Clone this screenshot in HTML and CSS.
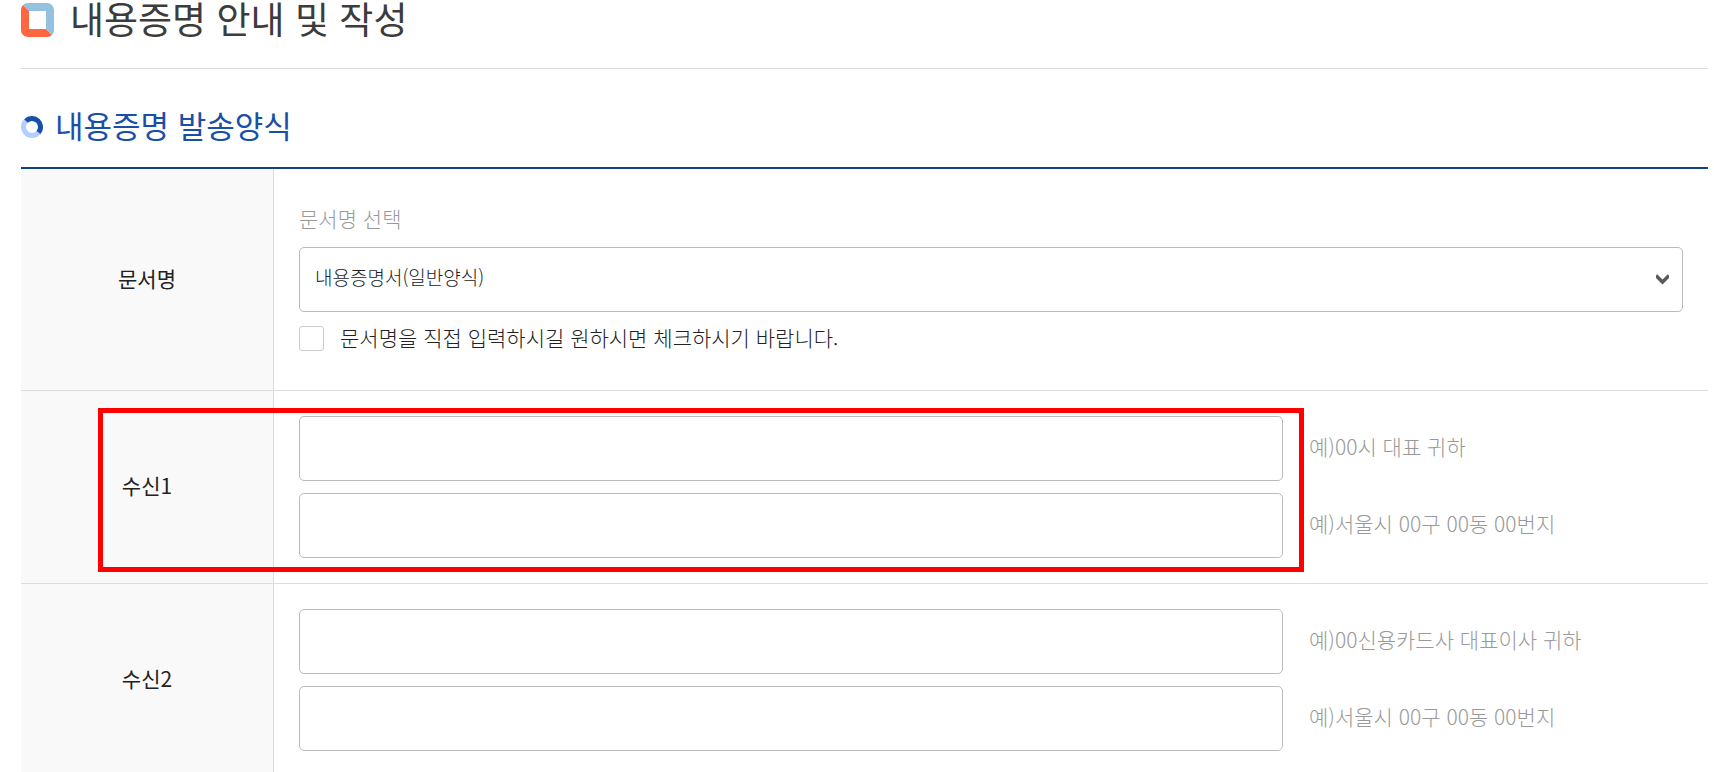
FILE: index.html
```html
<!DOCTYPE html>
<html lang="ko">
<head>
<meta charset="utf-8">
<title>내용증명 안내 및 작성</title>
<link rel="stylesheet" href="styles.css">
</head>
<body>
<main class="page">
  <header class="page-header">
    <svg class="page-icon" viewBox="0 0 33 34" aria-hidden="true">
      <path fill="#93c1df" d="M2 2A7 7 0 0 1 7 0H26A7 7 0 0 1 33 7V27A7 7 0 0 1 31 32L25 26V8H8Z"/>
      <path fill="#ff673f" d="M2 2A7 7 0 0 0 0 7V27A7 7 0 0 0 7 34H26A7 7 0 0 0 31 32L25 26H8V8Z"/>
    </svg>
    <h1 class="page-title">내용증명 안내 및 작성</h1>
  </header>

  <form class="notice-form">
    <div class="section-header">
      <svg class="section-icon" viewBox="0 0 22 22" aria-hidden="true">
        <circle cx="11" cy="11" r="8.5" fill="none" stroke="#b3cfff" stroke-width="5"/>
        <path d="M5 5A8.500 8.500 0 0 1 17.500 16.500" fill="none" stroke="#194fa8" stroke-width="5"/>
      </svg>
      <h2 class="section-title">내용증명 발송양식</h2>
    </div>

    <table class="form-table">
      <tbody>
        <tr>
          <th scope="row">문서명</th>
          <td class="document-cell">
            <label class="hint select-label" for="document">문서명 선택</label>
            <div class="select-wrap">
              <select class="field select" id="document">
                <option>내용증명서(일반양식)</option>
              </select>
              <svg class="chevron" viewBox="0 0 13 11" aria-hidden="true"><path d="M0 1.500L6.500 8L13 1.500" fill="none" stroke="#5a5a5a" stroke-width="3.500"/></svg>
            </div>
            <div class="check-row">
              <input class="checkbox" id="custom-name" type="checkbox">
              <label class="check-label" for="custom-name">문서명을 직접 입력하시길 원하시면 체크하시기 바랍니다.</label>
            </div>
          </td>
        </tr>
        <tr class="highlighted">
          <th scope="row">수신1</th>
          <td>
            <div class="field-list">
              <div class="field-row"><input class="field" id="to1-name" type="text"><label class="hint" for="to1-name">예)00시 대표 귀하</label></div>
              <div class="field-row"><input class="field" id="to1-address" type="text"><label class="hint" for="to1-address">예)서울시 00구 00동 00번지</label></div>
            </div>
          </td>
        </tr>
        <tr>
          <th scope="row">수신2</th>
          <td>
            <div class="field-list">
              <div class="field-row"><input class="field" id="to2-name" type="text"><label class="hint" for="to2-name">예)00신용카드사 대표이사 귀하</label></div>
              <div class="field-row"><input class="field" id="to2-address" type="text"><label class="hint" for="to2-address">예)서울시 00구 00동 00번지</label></div>
            </div>
          </td>
        </tr>
      </tbody>
    </table>
  </form>
</main>
</body>
</html>
```
FILE: styles.css
```css
* {
  box-sizing: border-box;
}

body {
  margin: 0;
  background: #fff;
  color: #222;
  font-family: "Noto Sans CJK KR", sans-serif;
  font-size: 21px;
  font-weight: 300;
  line-height: 30px;
}

.page {
  padding: 0 6px 0 21px;
}

.page-header {
  display: flex;
  align-items: flex-start;
  gap: 16px;
  padding-bottom: 31px;
  border-bottom: 1px solid #ddd;
}

.page-icon {
  width: 33px;
  height: 34px;
  margin-top: 3px;
}

.page-title {
  margin: 0;
  color: #3c3c3c;
  font-size: 37px;
  font-weight: 400;
  line-height: 36px;
}

.section-header {
  display: flex;
  align-items: center;
  gap: 12px;
  padding: 36px 0 18px;
}

.section-icon {
  width: 22px;
  height: 22px;
}

.section-title {
  margin: 0;
  padding-bottom: 4px;
  color: #194fa8;
  font-size: 31px;
  font-weight: 400;
  line-height: 40px;
}

.form-table {
  width: 100%;
  border-collapse: separate;
  border-spacing: 0;
  border-top: 2px solid #104382;
}

.form-table th,
.form-table td {
  padding: 25px;
  border-bottom: 1px solid #ddd;
}

.form-table th {
  width: 253px;
  padding-bottom: 29px;
  border-right: 1px solid #ddd;
  background: #f9f9f9;
  font-weight: 400;
  text-align: center;
}

.form-table .document-cell {
  padding: 34px 25px 36px;
}

.hint {
  padding-bottom: 5px;
  color: #999;
}

.select-label {
  display: block;
  margin-bottom: 9px;
}

.select-wrap {
  position: relative;
}

.field {
  display: block;
  width: 100%;
  height: 65px;
  padding: 0 15px;
  border: 1px solid #bbb;
  border-radius: 5px;
  background: #fff;
  color: #222;
  font: inherit;
}

.select {
  padding-bottom: 5px;
  appearance: none;
  font-size: 19px;
}

.chevron {
  position: absolute;
  top: 27px;
  right: 14px;
  width: 13px;
  height: 11px;
  pointer-events: none;
}

.check-row {
  display: flex;
  align-items: center;
  gap: 16px;
  margin-top: 10px;
}

.check-label {
  padding-bottom: 2px;
}

.checkbox {
  appearance: none;
  width: 25px;
  height: 25px;
  margin: 0;
  border: 1px solid #ccc;
  border-radius: 3px;
  background: #fff;
}

.checkbox:checked {
  background: #194fa8;
}

.field-list {
  display: grid;
  gap: 12px;
}

.field-row {
  display: grid;
  grid-template-columns: 1fr 374px;
  align-items: center;
  gap: 26px;
}

.highlighted {
  position: relative;
}

.highlighted::after {
  content: "";
  position: absolute;
  top: 17px;
  right: 404px;
  bottom: 12px;
  left: 77px;
  border: 5px solid #f00;
  pointer-events: none;
}
```
